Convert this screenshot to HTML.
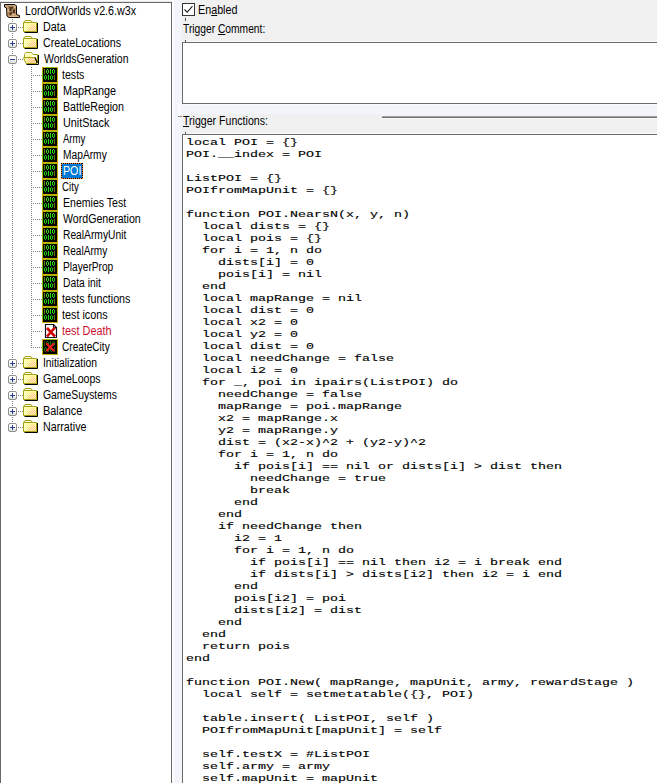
<!DOCTYPE html>
<html><head><meta charset="utf-8"><title>Trigger Editor</title>
<style>
html,body{margin:0;padding:0;}
body{width:657px;height:783px;overflow:hidden;background:#f0f0f0;position:relative;font-family:"Liberation Sans",sans-serif;font-size:11px;color:#000;}
.abs{position:absolute;}
#tree{position:absolute;left:0;top:2px;width:171px;height:781px;background:#fff;border-left:1px solid #696969;border-top:1px solid #696969;box-sizing:border-box;}
#treeR{position:absolute;left:171px;top:2px;width:1px;height:781px;background:#696969;}
.row{position:absolute;left:0;height:16px;line-height:16px;white-space:nowrap;}
.lbl{position:absolute;top:0;height:16px;line-height:16px;font-size:12px;white-space:pre;transform-origin:0 0;}
.ico{position:absolute;width:16px;height:16px;}
.vd{position:absolute;width:1px;background-image:linear-gradient(#808080 50%,transparent 50%);background-size:1px 2px;}
.hd{position:absolute;height:1px;background-image:linear-gradient(90deg,#808080 50%,transparent 50%);background-size:2px 1px;}
.pm{position:absolute;width:9px;height:9px;box-sizing:border-box;border:1px solid #919191;border-radius:2px;background:linear-gradient(#fff 40%,#d8d8d8);}
.pm i{position:absolute;left:1px;top:3px;width:5px;height:1px;background:#27408b;}
.pm b{position:absolute;left:3px;top:1px;width:1px;height:5px;background:#27408b;}
#code{position:absolute;left:185.8px;top:137px;margin:0;font-family:"Liberation Mono",monospace;font-weight:normal;font-size:8.5px;line-height:12px;white-space:pre;transform-origin:0 0;transform:scaleX(1.5686);color:#000;-webkit-text-stroke:0.12px #000;}
.box{position:absolute;background:#fff;border-top:1px solid #6a6a6a;border-left:1px solid #6a6a6a;box-sizing:border-box;}
u{text-decoration:underline;}
</style></head><body>

<div class="abs" style="left:0;top:0;width:172px;height:1px;background:#fafafa"></div>
<div class="abs" style="left:0;top:1px;width:172px;height:1px;background:#e6e6e6"></div>
<div id="tree">
<svg class="ico" style="left:3px;top:0px" viewBox="0 0 16 16"><use href="#i-root"/></svg>
<span class="lbl" style="left:23.61px;top:0px;transform:scaleX(0.8919)">LordOfWorlds v2.6.w3x</span>
<svg class="ico" style="left:22px;top:16px" viewBox="0 0 16 16"><use href="#i-fold"/></svg>
<span class="lbl" style="left:42.40px;top:16px;transform:scaleX(0.9000)">Data</span>
<svg class="ico" style="left:22px;top:32px" viewBox="0 0 16 16"><use href="#i-fold"/></svg>
<span class="lbl" style="left:41.81px;top:32px;transform:scaleX(0.8930)">CreateLocations</span>
<svg class="ico" style="left:22px;top:48px" viewBox="0 0 16 16"><use href="#i-fopen"/></svg>
<span class="lbl" style="left:42.70px;top:48px;transform:scaleX(0.8760)">WorldsGeneration</span>
<svg class="ico" style="left:41px;top:64px" viewBox="0 0 16 16"><use href="#i-trig"/></svg>
<span class="lbl" style="left:61.20px;top:64px;transform:scaleX(0.8840)">tests</span>
<svg class="ico" style="left:41px;top:80px" viewBox="0 0 16 16"><use href="#i-trig"/></svg>
<span class="lbl" style="left:61.80px;top:80px;transform:scaleX(0.9035)">MapRange</span>
<svg class="ico" style="left:41px;top:96px" viewBox="0 0 16 16"><use href="#i-trig"/></svg>
<span class="lbl" style="left:61.81px;top:96px;transform:scaleX(0.8866)">BattleRegion</span>
<svg class="ico" style="left:41px;top:112px" viewBox="0 0 16 16"><use href="#i-trig"/></svg>
<span class="lbl" style="left:61.80px;top:112px;transform:scaleX(0.9040)">UnitStack</span>
<svg class="ico" style="left:41px;top:128px" viewBox="0 0 16 16"><use href="#i-trig"/></svg>
<span class="lbl" style="left:61.80px;top:128px;transform:scaleX(0.7964)">Army</span>
<svg class="ico" style="left:41px;top:144px" viewBox="0 0 16 16"><use href="#i-trig"/></svg>
<span class="lbl" style="left:61.85px;top:144px;transform:scaleX(0.8520)">MapArmy</span>
<svg class="ico" style="left:41px;top:160px" viewBox="0 0 16 16"><use href="#i-trig"/></svg>
<div class="abs" style="left:60px;top:160px;width:22px;height:16px;background:#0078d7"></div>
<div class="abs" style="left:60px;top:160px;width:22px;height:1px;background:repeating-linear-gradient(90deg,#000 0 1px,#ff8728 1px 2px)"></div>
<div class="abs" style="left:60px;top:175px;width:22px;height:1px;background:repeating-linear-gradient(90deg,#000 0 1px,#ff8728 1px 2px)"></div>
<div class="abs" style="left:60px;top:160px;width:1px;height:16px;background:repeating-linear-gradient(180deg,#000 0 1px,#ff8728 1px 2px)"></div>
<div class="abs" style="left:81px;top:160px;width:1px;height:16px;background:repeating-linear-gradient(180deg,#000 0 1px,#ff8728 1px 2px)"></div>
<span class="lbl" style="left:61.81px;top:160px;transform:scaleX(0.8895);color:#fff">POI</span>
<svg class="ico" style="left:41px;top:176px" viewBox="0 0 16 16"><use href="#i-trig"/></svg>
<span class="lbl" style="left:60.99px;top:176px;transform:scaleX(0.8100)">City</span>
<svg class="ico" style="left:41px;top:192px" viewBox="0 0 16 16"><use href="#i-trig"/></svg>
<span class="lbl" style="left:61.82px;top:192px;transform:scaleX(0.8789)">Enemies Test</span>
<svg class="ico" style="left:41px;top:208px" viewBox="0 0 16 16"><use href="#i-trig"/></svg>
<span class="lbl" style="left:62.30px;top:208px;transform:scaleX(0.8851)">WordGeneration</span>
<svg class="ico" style="left:41px;top:224px" viewBox="0 0 16 16"><use href="#i-trig"/></svg>
<span class="lbl" style="left:61.85px;top:224px;transform:scaleX(0.8548)">RealArmyUnit</span>
<svg class="ico" style="left:41px;top:240px" viewBox="0 0 16 16"><use href="#i-trig"/></svg>
<span class="lbl" style="left:61.86px;top:240px;transform:scaleX(0.8385)">RealArmy</span>
<svg class="ico" style="left:41px;top:256px" viewBox="0 0 16 16"><use href="#i-trig"/></svg>
<span class="lbl" style="left:61.85px;top:256px;transform:scaleX(0.8466)">PlayerProp</span>
<svg class="ico" style="left:41px;top:272px" viewBox="0 0 16 16"><use href="#i-trig"/></svg>
<span class="lbl" style="left:61.84px;top:272px;transform:scaleX(0.8605)">Data init</span>
<svg class="ico" style="left:41px;top:288px" viewBox="0 0 16 16"><use href="#i-trig"/></svg>
<span class="lbl" style="left:61.20px;top:288px;transform:scaleX(0.8921)">tests functions</span>
<svg class="ico" style="left:41px;top:304px" viewBox="0 0 16 16"><use href="#i-trig"/></svg>
<span class="lbl" style="left:61.20px;top:304px;transform:scaleX(0.9020)">test icons</span>
<svg class="ico" style="left:41px;top:320px" viewBox="0 0 16 16"><use href="#i-bad"/></svg>
<span class="lbl" style="left:61.10px;top:320px;transform:scaleX(0.9056);color:#d01030">test Death</span>
<svg class="ico" style="left:41px;top:336px" viewBox="0 0 16 16"><use href="#i-off"/></svg>
<span class="lbl" style="left:61.06px;top:336px;transform:scaleX(0.8411)">CreateCity</span>
<svg class="ico" style="left:22px;top:352px" viewBox="0 0 16 16"><use href="#i-fold"/></svg>
<span class="lbl" style="left:42.44px;top:352px;transform:scaleX(0.8607)">Initialization</span>
<svg class="ico" style="left:22px;top:368px" viewBox="0 0 16 16"><use href="#i-fold"/></svg>
<span class="lbl" style="left:41.82px;top:368px;transform:scaleX(0.8812)">GameLoops</span>
<svg class="ico" style="left:22px;top:384px" viewBox="0 0 16 16"><use href="#i-fold"/></svg>
<span class="lbl" style="left:41.83px;top:384px;transform:scaleX(0.8655)">GameSuystems</span>
<svg class="ico" style="left:22px;top:400px" viewBox="0 0 16 16"><use href="#i-fold"/></svg>
<span class="lbl" style="left:42.40px;top:400px;transform:scaleX(0.9048)">Balance</span>
<svg class="ico" style="left:22px;top:416px" viewBox="0 0 16 16"><use href="#i-fold"/></svg>
<span class="lbl" style="left:42.41px;top:416px;transform:scaleX(0.8936)">Narrative</span>
<div class="vd" style="left:11px;top:16px;height:409px"></div>
<div class="vd" style="left:30px;top:64px;height:281px"></div>
<div class="hd" style="left:17px;top:24px;width:5px"></div>
<div class="pm" style="left:7px;top:20px"><i></i><b></b></div>
<div class="hd" style="left:17px;top:40px;width:5px"></div>
<div class="pm" style="left:7px;top:36px"><i></i><b></b></div>
<div class="hd" style="left:17px;top:56px;width:5px"></div>
<div class="pm" style="left:7px;top:52px"><i></i></div>
<div class="hd" style="left:32px;top:72px;width:9px"></div>
<div class="hd" style="left:32px;top:88px;width:9px"></div>
<div class="hd" style="left:32px;top:104px;width:9px"></div>
<div class="hd" style="left:32px;top:120px;width:9px"></div>
<div class="hd" style="left:32px;top:136px;width:9px"></div>
<div class="hd" style="left:32px;top:152px;width:9px"></div>
<div class="hd" style="left:32px;top:168px;width:9px"></div>
<div class="hd" style="left:32px;top:184px;width:9px"></div>
<div class="hd" style="left:32px;top:200px;width:9px"></div>
<div class="hd" style="left:32px;top:216px;width:9px"></div>
<div class="hd" style="left:32px;top:232px;width:9px"></div>
<div class="hd" style="left:32px;top:248px;width:9px"></div>
<div class="hd" style="left:32px;top:264px;width:9px"></div>
<div class="hd" style="left:32px;top:280px;width:9px"></div>
<div class="hd" style="left:32px;top:296px;width:9px"></div>
<div class="hd" style="left:32px;top:312px;width:9px"></div>
<div class="hd" style="left:32px;top:328px;width:9px"></div>
<div class="hd" style="left:32px;top:344px;width:9px"></div>
<div class="hd" style="left:17px;top:360px;width:5px"></div>
<div class="pm" style="left:7px;top:356px"><i></i><b></b></div>
<div class="hd" style="left:17px;top:376px;width:5px"></div>
<div class="pm" style="left:7px;top:372px"><i></i><b></b></div>
<div class="hd" style="left:17px;top:392px;width:5px"></div>
<div class="pm" style="left:7px;top:388px"><i></i><b></b></div>
<div class="hd" style="left:17px;top:408px;width:5px"></div>
<div class="pm" style="left:7px;top:404px"><i></i><b></b></div>
<div class="hd" style="left:17px;top:424px;width:5px"></div>
<div class="pm" style="left:7px;top:420px"><i></i><b></b></div>
</div><div id="treeR"></div>
<div class="abs" style="left:172px;top:0;width:2px;height:783px;background:#fdfdfe"></div>
<div class="abs" style="left:174px;top:0;width:8px;height:783px;background:#f3f5fb"></div>
<div class="abs" style="left:178px;top:104px;width:479px;height:10px;background:#f3f5fb"></div>
<div class="abs" style="left:382px;top:114px;width:275px;height:3px;background:#f3f5fb"></div>
<div class="abs" style="left:178px;top:104px;width:479px;height:1px;background:#fbfbfd"></div>
<div class="abs" style="left:178px;top:104px;width:2px;height:12px;background:#fbfbfd"></div>
<div class="abs" style="left:182px;top:3px;width:13px;height:13px;box-sizing:border-box;border:1px solid #333;background:#fff"><svg width="11" height="11" viewBox="0 0 11 11" style="position:absolute;left:0;top:0"><path d="M1.5 5.5 L4.2 8.2 L9.5 2.2" fill="none" stroke="#222" stroke-width="1.1"/></svg></div>
<span class="lbl" style="left:197.60px;top:2px;transform:scaleX(0.8952)">En<u>a</u>bled</span>
<span class="lbl" style="left:183.30px;top:21px;transform:scaleX(0.8547)">Trigger <u>C</u>omment:</span>
<div class="box" style="left:182px;top:42px;width:475px;height:62px;border-bottom:1px solid #6a6a6a"></div>
<span class="lbl" style="left:182.80px;top:113px;transform:scaleX(0.8821)"><u>T</u>rigger Functions:</span>
<div class="abs" style="left:382px;top:116px;width:275px;height:1px;background:#a4a4a6"></div>
<div class="abs" style="left:382px;top:117px;width:275px;height:1px;background:#6e6e6e"></div>
<div class="abs" style="left:382px;top:118px;width:275px;height:1px;background:#fafafa"></div>
<div class="abs" style="left:178px;top:116px;width:4px;height:1px;background:#8a8a8a"></div>
<div class="abs" style="left:182px;top:41px;width:475px;height:1px;background:#fafafa"></div>
<div class="abs" style="left:182px;top:133px;width:475px;height:1px;background:#fafafa"></div>
<div class="abs" style="left:185px;top:18px;width:1px;height:3px;background:#555"></div>
<div class="abs" style="left:185px;top:40px;width:1px;height:2px;background:#555"></div>
<div class="abs" style="left:185px;top:132px;width:1px;height:2px;background:#555"></div>
<div class="box" style="left:182px;top:134px;width:475px;height:649px"></div>
<pre id="code">local POI = {}
POI.__index = POI

ListPOI = {}
POIfromMapUnit = {}

function POI.NearsN(x, y, n)
  local dists = {}
  local pois = {}
  for i = 1, n do
    dists[i] = 0
    pois[i] = nil
  end
  local mapRange = nil
  local dist = 0
  local x2 = 0
  local y2 = 0
  local dist = 0
  local needChange = false
  local i2 = 0
  for _, poi in ipairs(ListPOI) do
    needChange = false
    mapRange = poi.mapRange
    x2 = mapRange.x
    y2 = mapRange.y
    dist = (x2-x)^2 + (y2-y)^2
    for i = 1, n do
      if pois[i] == nil or dists[i] &gt; dist then
        needChange = true
        break
      end
    end
    if needChange then
      i2 = 1
      for i = 1, n do
        if pois[i] == nil then i2 = i break end
        if dists[i] &gt; dists[i2] then i2 = i end
      end
      pois[i2] = poi
      dists[i2] = dist
    end
  end
  return pois
end

function POI.New( mapRange, mapUnit, army, rewardStage )
  local self = setmetatable({}, POI)

  table.insert( ListPOI, self )
  POIfromMapUnit[mapUnit] = self

  self.testX = #ListPOI
  self.army = army
  self.mapUnit = mapUnit</pre>
<svg width="0" height="0" style="position:absolute">
<defs>
<g id="i-root">
<path d="M0.5 1.5 H11 L12.5 3 V11.5 L15.5 12.5 V14.5 H5 L3 13 L2.5 5 L0.5 4 Z" fill="#c6a074" stroke="#0c0806" stroke-width="1" stroke-linejoin="round"/>
<path d="M4 3 H11.5 V11 L6 13 L4 11 Z" fill="#a88458"/>
<path d="M5.5 4 H9 V5.5 H7.5 V8 H5.5 Z M9 6.5 H11 V10 H9 Z M5 10.5 L8 8.5 L8.5 10 L6 12.5 Z" fill="#4a3422"/>
<path d="M3.5 6 H5 V9 H3.5 Z M10 3 H11.5 V5 H10 Z M8 11 H11 V12 H8 Z" fill="#dcb88c"/>
<path d="M5 13.5 H14.5" stroke="#e4bc8c" stroke-width="1"/>
</g>
<pattern id="chk" width="2" height="2" patternUnits="userSpaceOnUse"><rect width="1" height="1" fill="#ffbc9c"/><rect x="1" y="1" width="1" height="1" fill="#ffbc9c"/></pattern>
<g id="i-fold">
<path d="M0.5 12.5 V3.5 L2 1.5 H8 L9.5 3.5 H13.5 V12.5 Z" fill="#fffaa4" stroke="#a4a210" stroke-width="1" stroke-linejoin="round"/>
<path d="M1 3.5 H9.5" stroke="#a4a210" stroke-width="1"/>
<path d="M2.5 2.5 H7.5" stroke="#fff" stroke-width="1"/>
<rect x="1" y="4" width="2" height="8" fill="#ffffc4"/>
<rect x="8" y="5" width="4" height="2" fill="#ffe89c"/>
<path d="M8 7 H13 V12 H3 Z" fill="url(#chk)"/>
<path d="M14.5 4 V13.5 H1.5" fill="none" stroke="#000" stroke-width="1"/>
</g>
<g id="i-fopen">
<path d="M1.5 6.5 V3.5 L3 1.5 H8.5 L10 3.5 H14.5 V12" fill="#fffff0" stroke="#a4a210" stroke-width="1" stroke-linejoin="round"/>
<rect x="3" y="3" width="6" height="3" fill="#ffffb0"/>
<path d="M0.5 6.5 H12 L14 12.5 H3 Z" fill="#fff6a0" stroke="#a4a210" stroke-width="1" stroke-linejoin="round"/>
<path d="M5 7 H12 V12 H4 Z" fill="url(#chk)"/>
<path d="M9 9 H12.5 V12 H7 Z" fill="#ffb888" opacity="0.35"/>
<path d="M12.2 6.5 L14.2 12" stroke="#000" stroke-width="1.2"/>
<path d="M15.5 4 V13.5 H3.5" fill="none" stroke="#000" stroke-width="1"/>
</g>
<g id="trigbase">
<rect x="0" y="0" width="16" height="16" fill="#c4ae00"/>
<rect x="4" y="0" width="8" height="1" fill="#7cc000"/>
<rect x="0" y="4" width="1" height="8" fill="#7cc000"/>
<rect x="1" y="1" width="14" height="14" fill="#000"/>
</g>
<g id="digits" fill="none" stroke-width="1">
<path d="M2.5 2 V7 M12.5 8 V13" stroke="#6a7800"/>
<path d="M8.5 2 V7 M6.5 8 V13 M5.5 2 v1 M5.5 6 v1 M4.5 3 v3 M6.5 3 v3 M11.5 2 v1 M11.5 6 v1 M10.5 3 v3 M12.5 3 v3 M3.5 8 v1 M3.5 12 v1 M2.5 9 v3 M4.5 9 v3 M9.5 8 v1 M9.5 12 v1 M8.5 9 v3 M10.5 9 v3" stroke="#22dc08"/>
</g>
<g id="i-trig">
<use href="#trigbase"/>
<use href="#digits"/>
</g>
<g id="i-off">
<use href="#trigbase"/>
<use href="#digits" opacity="0.55"/>
<path d="M5 5 L11.5 11.5 M11.5 5 L5 11.5" stroke="#f01818" stroke-width="2.2" stroke-linecap="round"/>
</g>
<g id="i-bad">
<path d="M3.5 1.5 H11.5 L14.5 4.5 V14.5 H3.5 Z" fill="#fff" stroke="#14141c" stroke-width="1.2"/>
<path d="M11.5 1.5 V4.5 H14.5" fill="none" stroke="#14141c" stroke-width="1"/>
<path d="M5 5 L13 13.5 M13 4.5 L5 13.5" stroke="#cc0808" stroke-width="2.6"/>
</g>
</defs></svg>
</body></html>
